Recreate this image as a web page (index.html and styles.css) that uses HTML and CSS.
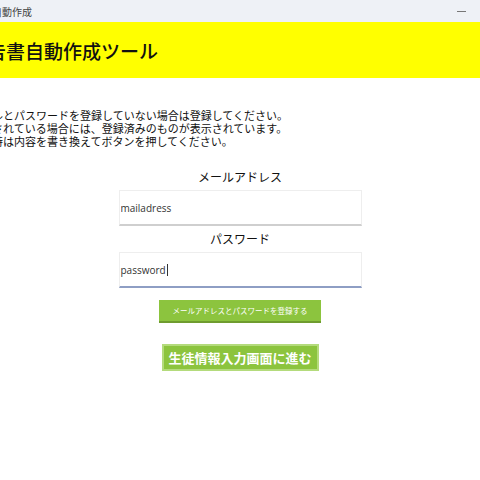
FILE: index.html
```html
<!DOCTYPE html>
<html lang="ja">
<head>
<meta charset="UTF-8">
<title>報告書自動作成</title>
<link rel="stylesheet" href="styles.css">
</head>
<body>
<div class="titlebar">
    <span class="app-name">報告書自動作成</span>
    <span class="minimize"></span>
</div>
<header class="banner">
    <h1>報告書自動作成ツール</h1>
</header>
<div class="intro">
    <p>メールとパスワードを登録していない場合は登録してください。</p>
    <p>登録されている場合には、登録済みのものが表示されています。</p>
    <p>変更時は内容を書き換えてボタンを押してください。</p>
</div>
<div class="form">
    <label class="label" for="mail">メールアドレス</label>
    <input class="field" id="mail" type="text" value="mailadress">
    <label class="label" for="pass">パスワード</label>
    <div class="field focused">password<span class="caret"></span></div>
    <button class="btn-save">メールアドレスとパスワードを登録する</button>
    <button class="btn-next">生徒情報入力画面に進む</button>
</div>
</body>
</html>
```

FILE: styles.css
```css
body {
    margin: 0;
    background-color: #ffffff;
    font-family: "Noto Sans CJK JP", "Noto Sans", sans-serif;
    color: #1a1a1a;
    overflow: hidden;
}
.titlebar {
    height: 22px;
    background-color: #eef1f6;
    display: flex;
    align-items: center;
    justify-content: space-between;
}
.app-name {
    font-size: 10px;
    color: #444;
    margin-left: -38px;
}
.minimize {
    width: 9px;
    height: 1px;
    background-color: #777;
    margin-right: 14px;
}
.banner {
    height: 56px;
    background-color: #ffff00;
    display: flex;
    align-items: center;
}
.banner h1 {
    margin: 0 0 0 -32px;
    font-size: 19px;
    font-weight: 500;
    white-space: nowrap;
    color: #111;
}
.intro {
    margin: 31px 0 0 -30px;
    font-size: 11px;
    line-height: 13px;
    color: #111;
}
.intro p {
    margin: 0;
    white-space: nowrap;
}
.form {
    width: 243px;
    margin: 21px auto 0;
    display: flex;
    flex-direction: column;
    align-items: center;
}
.label {
    font-size: 12px;
    line-height: 16px;
    color: #111;
    margin-bottom: 5px;
}
.field {
    box-sizing: border-box;
    width: 243px;
    height: 36px;
    margin: 0 0 5px;
    padding: 0 1px;
    border: 1px solid #eeeeee;
    border-bottom: 2px solid #cfcfcf;
    background-color: #fff;
    font-family: "Open Sans", "Noto Sans", sans-serif;
    font-size: 10px;
    color: #333;
    display: flex;
    align-items: center;
    outline: none;
}
.focused {
    border-bottom: 2px solid #8e9ec4;
}
.caret {
    display: inline-block;
    width: 1px;
    height: 12px;
    background-color: #333;
    margin-left: 1px;
}
.btn-save {
    margin-top: 7px;
    width: 162px;
    height: 23px;
    padding: 0;
    border: none;
    border-bottom: 2px solid #6f9c2f;
    background-color: #8cc43e;
    color: #fff;
    font-family: "Noto Sans CJK JP", sans-serif;
    font-size: 7.5px;
}
.btn-next {
    margin-top: 21px;
    width: 157px;
    height: 27px;
    padding: 0;
    border: 2px solid #b4db7c;
    background-color: #8cc43e;
    color: #fff;
    font-family: "Noto Sans CJK JP", sans-serif;
    font-size: 13px;
    font-weight: 700;
}
```
